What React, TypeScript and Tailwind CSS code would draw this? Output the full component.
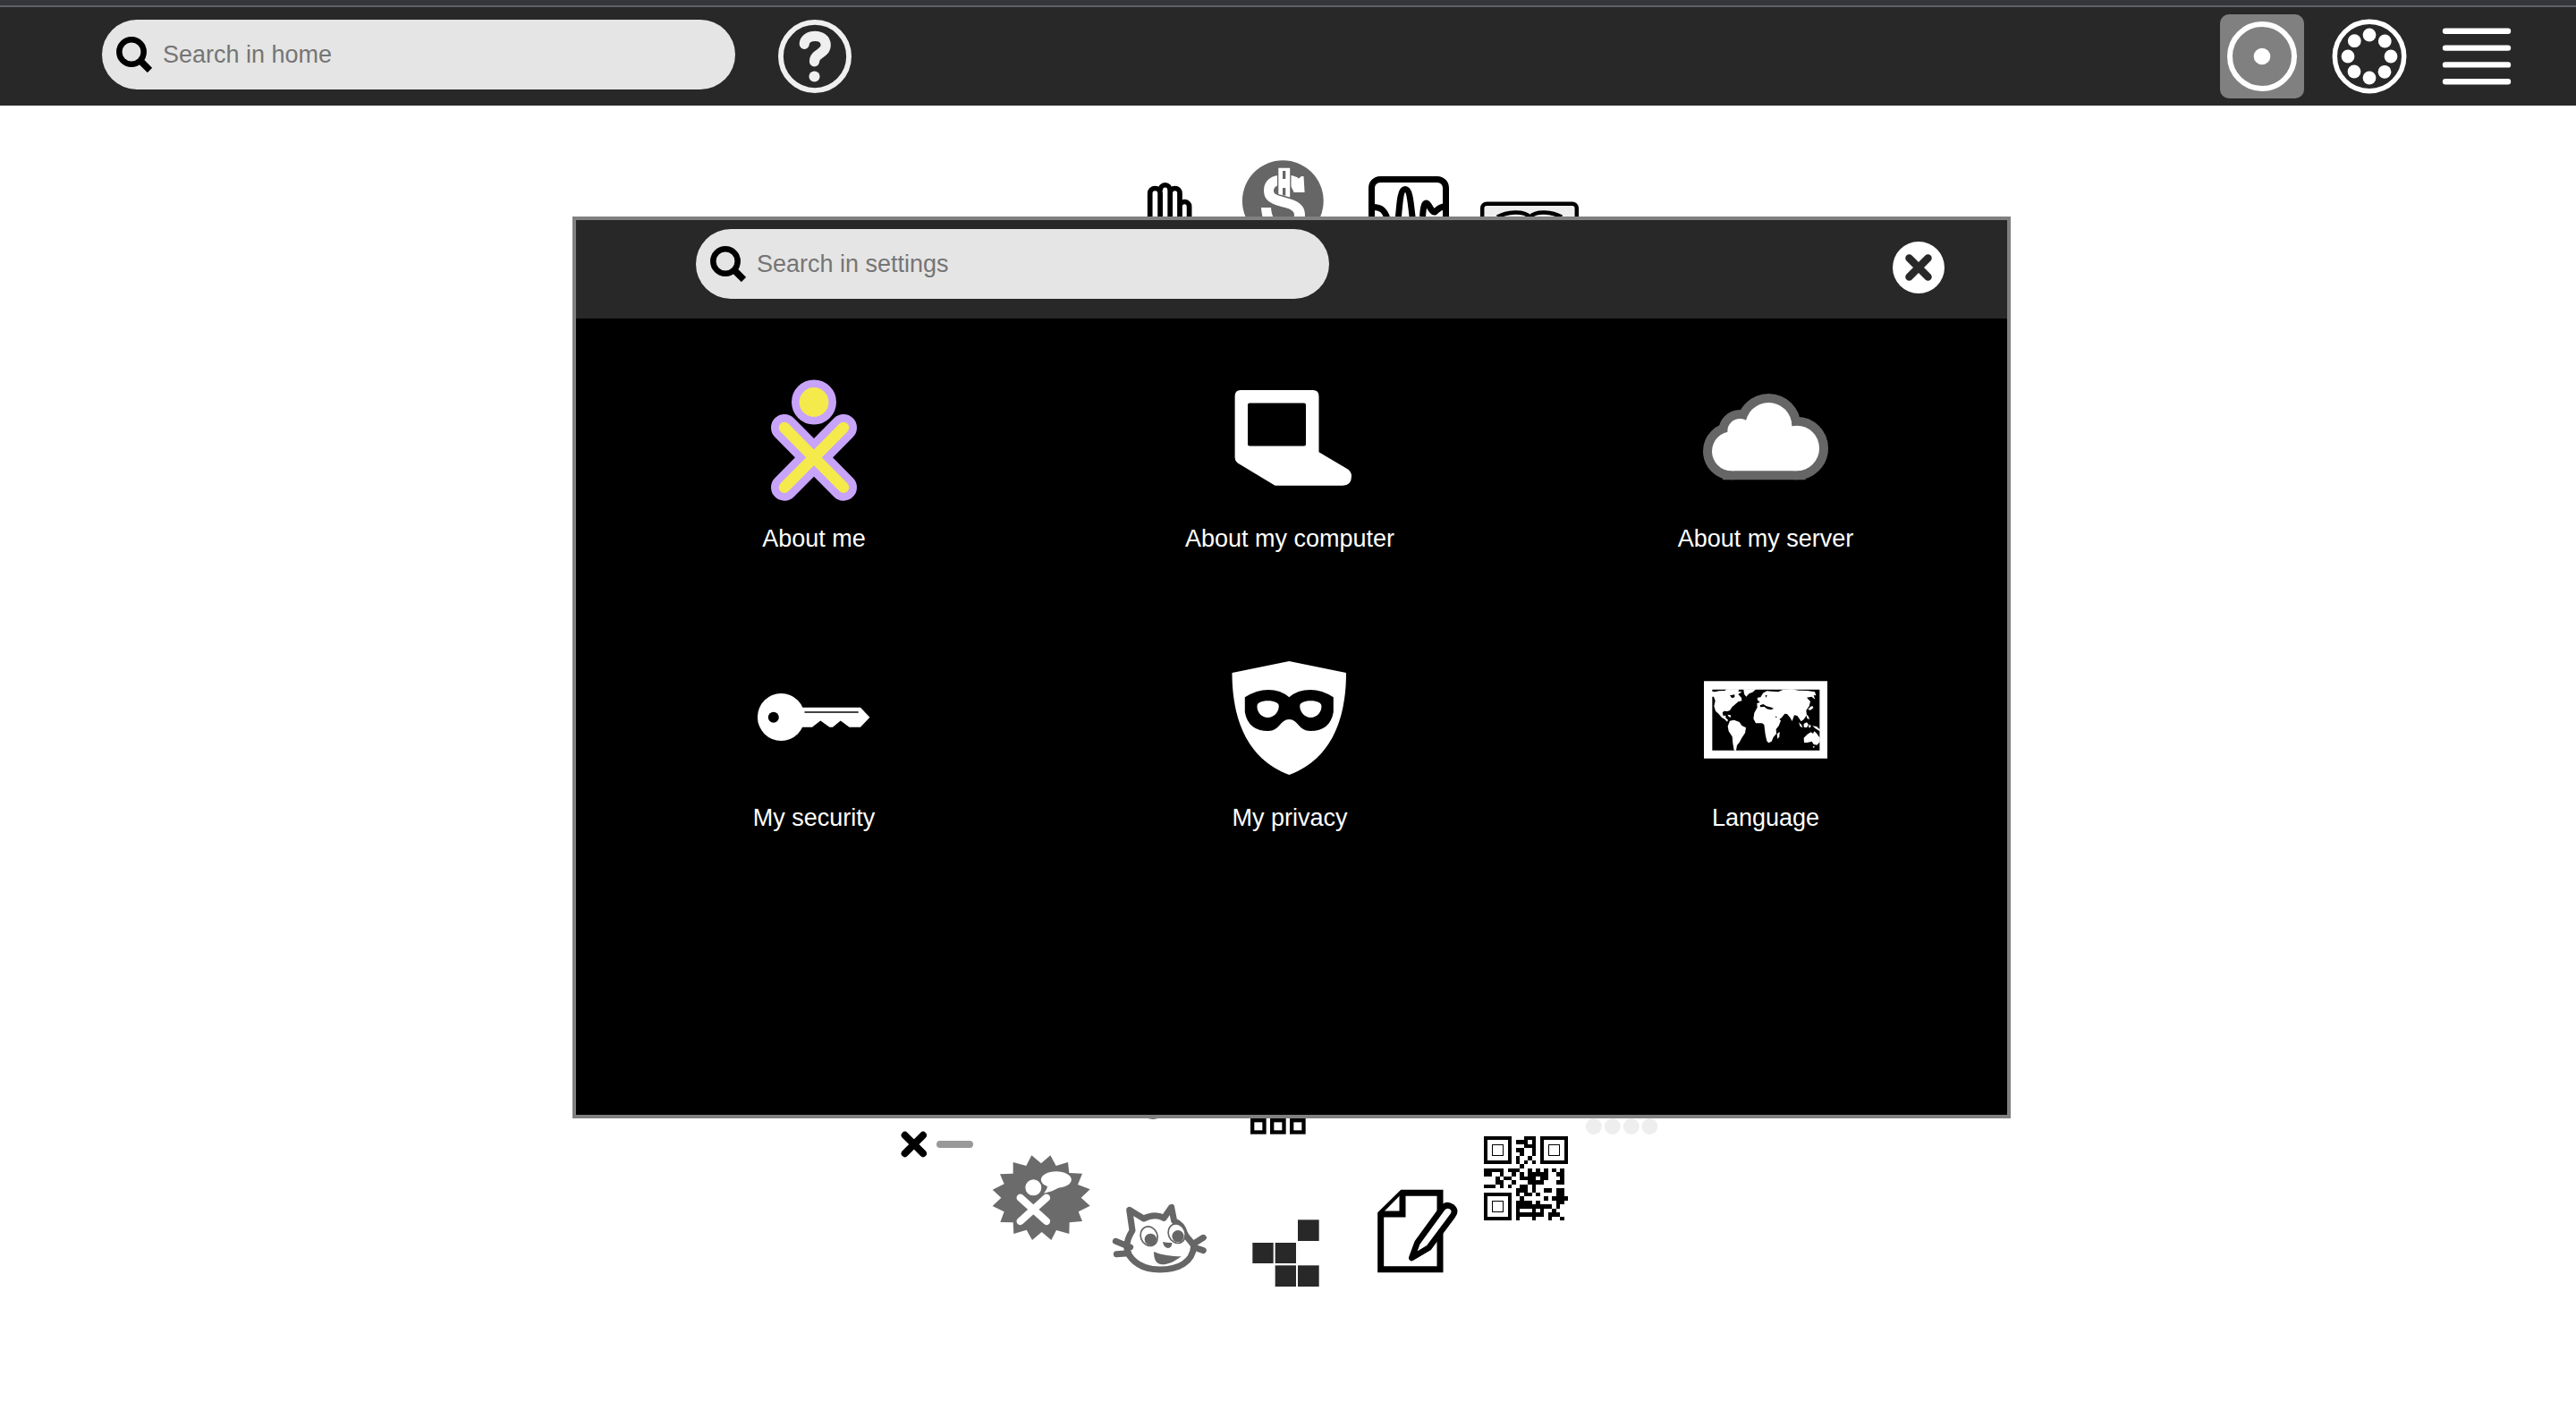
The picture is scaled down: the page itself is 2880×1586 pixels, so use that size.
import React from "react";

type Drawing = { name: string; box: string; view: string; art: React.ReactNode };

const qrRows = [
  "..........111........",
  "........111.1........",
  "..........111........",
  "........11..1........",
  ".........1..1........",
  "........1..1.........",
  "........1.1.1........",
  ".........1...........",
  "11111.111..1.1.1.1.1.",
  "11..1..1.1.11111..11.",
  "...1.11..1111.11...1.",
  "...11..1...1111...11.",
  "111.1.1..11.1........",
  "........111.1..11.11.",
  "........1.11.1....11.",
  ".........1.....1.1111",
  "........1111.1....11.",
  "........111111111.1..",
  "........1...1.1..1...",
  "........1111111.111..",
  "........1...1...1..1.",
];

function QrCode() {
  return (
    <g shapeRendering="crispEdges">
      {qrRows.flatMap((row, y) =>
        row.split("").map((c, x) => (c === "1" ? <rect key={`${x}-${y}`} x={x} y={y} width="1" height="1" /> : null)),
      )}
      {[
        [0, 0],
        [14, 0],
        [0, 14],
      ].map(([x, y]) => (
        <g key={`${x}:${y}`} fill="none" stroke="#000">
          <rect x={x + 0.5} y={y + 0.5} width="6" height="6" />
          <rect x={x + 2.1} y={y + 2.1} width="2.8" height="2.8" strokeWidth="0.25" />
        </g>
      ))}
    </g>
  );
}

const activities: Drawing[] = [
  {
    name: "Hand",
    box: "absolute left-[328px] top-[82px] h-[50px] w-[72px]",
    view: "1268 200 72 50",
    art: (
      <path
        d="M1285.7 260V216a5.7 5.5 0 0 1 11.4 0V260M1297.1 213a5.5 6.2 0 0 1 11.1 0V260M1308.2 216a5.4 5.5 0 0 1 10.8 0V260M1319 230.500a5.3 5 0 0 1 10.6 0V260"
        fill="#fff"
        stroke="#000"
        strokeWidth="5.7"
      />
    ),
  },
  {
    name: "Money",
    box: "absolute left-[446px] top-[58px] h-[98px] w-[98px]",
    view: "1386 176 98 98",
    art: (
      <>
        <circle cx="1434.3" cy="224.6" r="45.4" fill="#666" />
        <path
          d="M1458.600 215H1446.500C1444 208 1442 206 1436 206C1428 206 1424 209 1424 213C1424 217 1427 218 1436 220.500C1451 224 1459 229 1459 240C1459 252 1450 258 1435 258C1420 258 1411 251 1410 232H1421C1422 244 1426 249 1435 249C1443 249 1447 246 1447 240C1447 235 1441 233 1431 230.500C1419 227 1413 223 1413 213C1413 201 1422 195.500 1435 195.500C1444 195.500 1449 197 1452 199.500L1455 197H1457.500Z"
          fill="#fff"
        />
        <path d="M1428 186.500h15.500V219L1428 216Z" fill="#666" />
        <path d="M1429.300 187.700H1442.200V220.500L1429.300 217Z" fill="#fff" />
        <path d="M1434 191h3.300v9H1434ZM1434 210h3.300v8.500H1434Z" fill="#666" />
        <path d="M1429.500 231V250M1434.500 233H1436V241M1440 234Q1446 236 1445 250" fill="none" stroke="#666" strokeWidth="1.500" />
      </>
    ),
  },
  {
    name: "Measure",
    box: "absolute left-[588px] top-[77px] h-[96px] w-[96px]",
    view: "1528 195 96 96",
    art: (
      <g fill="none" stroke="#000" strokeWidth="7">
        <rect x="1533.500" y="200.500" width="83" height="83" rx="9.500" />
        <path d="M1535 231.500C1544 231.500 1548 235 1551 244C1554 254 1562 254 1563.500 242C1565 224 1566 211.500 1571 211.500C1576 211.500 1577 224 1579 242C1580 256 1589 256 1590.500 242C1591.500 226 1594 225 1597 229C1600 234 1602 237.500 1604 237C1607 235 1609 231 1615 231" />
      </g>
    ),
  },
  {
    name: "Video viewer",
    box: "absolute left-[712px] top-[104px] h-[70px] w-[116px]",
    view: "1652 222 116 70",
    art: (
      <g fill="#efefef" stroke="#000" strokeWidth="4.500">
        <rect x="1657.200" y="227.700" width="105.600" height="60" rx="5" />
        <path d="M1674 242.500C1684 237 1703 234.500 1710.500 242.500C1718 234.500 1736 237 1746 242.500" fill="none" />
      </g>
    ),
  },
  {
    name: "Planet",
    box: "absolute left-[340px] top-[1111px] h-[22px] w-[18px]",
    view: "0 0 18 22",
    art: <circle cx="9" cy="3" r="19" fill="#666" />,
  },
  {
    name: "Calculate",
    box: "absolute left-[65px] top-[1144px] h-[34px] w-[85px]",
    view: "45 96 255 102",
    art: (
      <g strokeWidth="24" strokeLinecap="round">
        <path d="M65 116.500L126 177.500M126 116.500L65 177.500" stroke="#000" />
        <path d="M183 147H282" stroke="#999" />
      </g>
    ),
  },
  {
    name: "Speak",
    box: "absolute left-[168px] top-[1172px] h-[98px] w-[112px]",
    view: "354 180 336 294",
    art: (
      <>
        <path
          d="M490 184L522 211L553 184L572 219L612 207L616 243L660 245L645 282L686 298L656 326L686 353L647 373L660 405L617 409L616 447L573 435L556 468L524 441L492 468L473 434L430 447L428 409L385 408L398 373L359 354L388 326L359 299L398 280L384 247L428 245L428 207L472 219Z"
          fill="#6b6b6b"
        />
        <path d="M545 280Q543 298 531 311Q560 306 582 292Z" fill="#fff" />
        <ellipse cx="572.500" cy="265.500" rx="51" ry="28" fill="#fff" />
        <circle cx="496" cy="292" r="29" fill="#fff" stroke="#6b6b6b" strokeWidth="4" />
        <path d="M452 326L540 405M540 326L452 405" stroke="#fff" strokeWidth="25" strokeLinecap="round" />
      </>
    ),
  },
  {
    name: "Scratch",
    box: "absolute left-[302px] top-[1226px] h-[80px] w-[108px]",
    view: "756 342 324 240",
    art: (
      <g fill="none" stroke="#666" strokeWidth="21" strokeLinecap="round" strokeLinejoin="round">
        <path
          d="M818 367L828 436C804 474 806 500 818 520C842 555 880 567 920 567C984 567 1030 542 1034 489C1030 474 1010 462 1003 444C997 422 983 410 968 404L959 358L934 394C915 384 890 384 866 396Z"
          fill="#fff"
        />
        <path d="M772 472L821 492M775 515L815 512M1034 480L1066 460M1034 492L1066 503" />
        <g strokeWidth="5" fill="#fff">
          <ellipse cx="884" cy="455" rx="28" ry="33" transform="rotate(-22 884 455)" />
          <ellipse cx="977" cy="446" rx="28" ry="33" transform="rotate(-22 977 446)" />
        </g>
        <g fill="#666" stroke="none">
          <circle cx="889" cy="466" r="20" />
          <circle cx="981" cy="455" r="20" />
          <path d="M930 474Q945 478 961 477Q962 494 947 495Q933 493 930 474Z" />
          <path d="M900 507C925 518 960 523 992 523C965 543 945 551 926 550C908 547 900 535 900 507Z" />
        </g>
      </g>
    ),
  },
  {
    name: "Tables",
    box: "absolute left-[457px] top-[1122px] h-[30px] w-[64px]",
    view: "111 30 192 90",
    art: (
      <g fill="#fff" stroke="#000" strokeWidth="13">
        <rect x="120.500" y="66.500" width="40" height="40" />
        <rect x="186.500" y="66.500" width="40" height="40" />
        <rect x="252.500" y="66.500" width="40" height="40" />
      </g>
    ),
  },
  {
    name: "Blocks",
    box: "absolute left-[459px] top-[1244px] h-[77px] w-[77px]",
    view: "117 396 231 231",
    art: (
      <g fill="#282828">
        <rect x="273" y="400" width="71" height="71" />
        <rect x="121" y="477" width="70" height="69" />
        <rect x="197" y="477" width="70" height="69" />
        <rect x="197" y="553" width="70" height="71" />
        <rect x="273" y="553" width="71" height="71" />
      </g>
    ),
  },
  {
    name: "Write",
    box: "absolute left-[599px] top-[1210px] h-[96px] w-[92px]",
    view: "537 294 276 288",
    art: (
      <g fill="#fff" stroke="#000" strokeWidth="21">
        <path d="M551 566.500V380L623 309.500H750V566.500Z" />
        <path d="M624 310V381H554" />
        <path
          d="M655 528L674 476L757 362Q772 344 790 357Q805 370 792 387L712 494Z"
          strokeLinejoin="round"
          strokeWidth="20"
        />
      </g>
    ),
  },
  {
    name: "QR code",
    box: "absolute left-[719px] top-[1152px] h-[94px] w-[94px]",
    view: "0 0 21 21",
    art: <QrCode />,
  },
  {
    name: "Four in a row",
    box: "absolute left-[832px] top-[1131px] h-[20px] w-[82px]",
    view: "426 57 246 60",
    art: (
      <g fill="#eee">
        <circle cx="455.500" cy="87" r="27" />
        <circle cx="518.500" cy="87" r="27" />
        <circle cx="581.500" cy="87" r="27" />
        <circle cx="643" cy="87" r="27" />
      </g>
    ),
  },
];

const settings: Omit<Drawing, "box">[] = [
  {
    name: "About me",
    view: "840 421 140 140",
    art: (
      <>
        <g strokeLinecap="round">
          <path d="M877 478L943 544.700M943 478L877 544.700" stroke="#c8a3fa" strokeWidth="30" />
          <path d="M877 478L943 544.700M943 478L877 544.700" stroke="#f5ea4b" strokeWidth="12.500" />
        </g>
        <circle cx="910" cy="449.500" r="20.700" fill="#f5ea4b" stroke="#c8a3fa" strokeWidth="8.600" />
      </>
    ),
  },
  {
    name: "About my computer",
    view: "1372 421 140 140",
    art: (
      <>
        <path
          d="M1387 436H1468Q1474.500 436 1474.500 443V505.300L1507 524.500Q1511 527.500 1511 532Q1511 542.700 1501 542.700H1426.500Q1425 542.700 1423.500 541.500L1383.700 517.500Q1380.600 515 1380.600 511.500V443Q1380.600 436 1387 436Z"
          fill="#fff"
        />
        <rect x="1395" y="450.500" width="65" height="48" rx="2" />
      </>
    ),
  },
  {
    name: "About my server",
    view: "132 63 420 420",
    art: (
      <>
        {["#666", "#fff"].map((color) => (
          <g key={color} fill={color} stroke={color} strokeWidth={color === "#666" ? 60 : 0}>
            <circle cx="228" cy="313" r="66" />
            <circle cx="256" cy="246" r="42" />
            <circle cx="352" cy="228" r="78" />
            <circle cx="446" cy="303" r="76" />
            <path d="M228 250H446V379H228Z" />
          </g>
        ))}
      </>
    ),
  },
  {
    name: "My security",
    view: "840 733 140 140",
    art: (
      <>
        <circle cx="873.300" cy="801.500" r="26.400" fill="#fff" />
        <path
          d="M895 790.700H962L972.400 801.700L962 812.700H949.500L939.800 805.500L931 812.700H927.500L917.300 805.500L908 812.700H895Z"
          fill="#fff"
        />
        <circle cx="864.800" cy="801.700" r="6" />
        <path d="M899.500 796H959.700" stroke="#444" strokeWidth="2" />
      </>
    ),
  },
  {
    name: "My privacy",
    view: "1372 733 140 140",
    art: (
      <>
        <path d="M1441.300 739L1505 752C1505 790 1496 846 1441.300 866C1386.600 846 1377.500 790 1377.500 752Z" fill="#fff" />
        <path d="M1391.800 779.300Q1405 771 1418 771Q1432 771 1441.300 779.300Q1450.500 771 1465 771Q1478 771 1490.800 779.300V796Q1487 817 1465 817C1452 817 1451 804 1441.300 804C1431.500 804 1430.500 817 1418 817Q1395.500 817 1391.800 796Z" />
        <path
          d="M1405.600 788C1407 781.500 1428 781.500 1429.700 788C1430.500 795 1424.500 802 1417.500 802C1410 802 1404.500 795 1405.600 788ZM1453.300 788C1455 781.500 1476 781.500 1477.300 788C1478.500 795 1472.500 802 1465.500 802C1458.500 802 1452.500 795 1453.300 788Z"
          fill="#fff"
        />
      </>
    ),
  },
  {
    name: "Language",
    view: "132 9 420 420",
    art: (
      <>
        <path d="M135 94H549V353H135Z" fill="#fff" />
        <path d="M163 122H523V326H163Z" />
        <g fill="#fff">
          <path d="M162 146V128L172 130L185 127L205 126L212 121H254L250 128L262 130L250 138L261 150L262 160L250 163L238 173L230 180L222 192L214 195L202 194L197 200L200 210L208 209L208 217L216 224L213 230L205 222L195 216L184 203L174 194L169 178L173 160L168 146Z" />
          <path d="M268 121H310L298 131L286 136L277 146L270 137Z" />
          <path d="M214 206L224 208L226 215L219 214Z" />
          <path d="M222 227L236 224L254 231L262 243L276 250L273 268L262 284L254 299L246 309L243 326H236L232 302L230 280L218 262L215 245Z" />
          <path d="M314 182L313 168L323 165L314 156L315 149L325 148L333 134L346 127L362 128L384 130L400 123L430 121L452 125L482 126L507 130L511 142L503 141L508 155L496 146L480 149L492 162L488 178L478 192L480 208L470 222L461 229L454 218L448 210L438 208L431 228L424 216L414 204L406 203L396 216L388 222L393 226L386 244L377 255L378 270L368 282L362 296L352 301L346 295L341 272L337 240L330 235L309 235L301 220L304 200Z" />
          <path d="M380 271L389 264L388 280L382 288Z" />
          <path d="M484 189L492 180L499 177L502 184L492 191Z" />
          <path d="M478 204L486 212L489 222L481 219Z" />
          <path d="M453 232L462 240L466 250L458 246Z" />
          <path d="M470 237L480 232L486 240L480 250L470 248Z" />
          <path d="M488 240L494 242L492 250L486 249Z" />
          <path d="M499 244L513 246L524 256V262L508 252Z" />
          <path d="M470 284L482 272L494 265L501 270L505 262L512 268L524 284V298L514 308L503 306L497 296L482 300L471 300Z" />
          <path d="M500 313H507L503 319Z" />
        </g>
        <path d="M323 175L334 171L345 178L362 182L369 186L360 190L346 187L338 180L324 181ZM222 142L238 139L238 148L229 151ZM374 211L381 215L377 217ZM341 140L347 142L343 150Z" />
      </>
    ),
  },
];

function SearchBox({ id, label, className }: { id: string; label: string; className: string }) {
  return (
    <div className={`flex h-[78px] w-[708px] items-center rounded-full bg-[#e5e5e5] pl-4 pr-8 ${className}`}>
      <label htmlFor={id} aria-label={label} className="shrink-0">
        <svg viewBox="0 0 40 40" className="h-10 w-10" fill="none" stroke="#000">
          <circle cx="17" cy="17" r="13.700" strokeWidth="6.500" />
          <path d="M26.500 26.500L37.500 37.500" strokeWidth="7.500" />
        </svg>
      </label>
      <input
        id={id}
        type="text"
        placeholder={label}
        className="ml-3 min-w-0 flex-1 bg-transparent text-[27px] leading-9 text-black outline-none placeholder:text-[#757575]"
      />
    </div>
  );
}

export default function App() {
  return (
    <div className="flex min-h-screen flex-col bg-white font-['Liberation_Sans',Arial,sans-serif]">
      <div className="h-2 border-b-2 border-[#605f68] bg-[#35363c]" />
      <header className="flex h-[110px] items-center bg-[#282828] pl-[114px] pr-16">
        <SearchBox id="search-home" label="Search in home" className="mb-1" />
        <button type="button" aria-label="Help" className="ml-12">
          <svg viewBox="869 21 84 84" className="h-[82px] w-[82px]" fill="none" stroke="#efefef">
            <circle cx="911" cy="63" r="39" strokeWidth="6" />
            <path d="M899 49C899 37 923.500 36 923.500 50C923.500 60.500 910.500 59 910.500 69" strokeWidth="11.500" strokeLinecap="round" />
            <circle cx="910.500" cy="86" r="6.200" fill="#efefef" stroke="none" />
          </svg>
        </button>
        <div className="ml-auto flex gap-[26px]">
          <button type="button" aria-label="Favorites view" className="rounded-[10px] bg-[#808080]">
            <svg viewBox="0 0 94 94" className="h-[94px] w-[94px]">
              <circle cx="47" cy="47" r="36" fill="none" stroke="#fff" strokeWidth="6" />
              <circle cx="47" cy="47" r="9.300" fill="#fff" />
            </svg>
          </button>
          <button type="button" aria-label="Neighborhood view">
            <svg viewBox="0 0 94 94" className="h-[94px] w-[94px]" fill="#fff">
              <circle cx="47" cy="47" r="38.700" fill="none" stroke="#fff" strokeWidth="5.500" />
              <circle cx="47" cy="23" r="7.400" />
              <circle cx="64.300" cy="30" r="7.400" />
              <circle cx="71" cy="47" r="7.400" />
              <circle cx="64" cy="64.300" r="7.400" />
              <circle cx="47" cy="71" r="7.400" />
              <circle cx="30" cy="64" r="7.400" />
              <circle cx="23" cy="47" r="7.400" />
              <circle cx="30.300" cy="29.700" r="7.400" />
            </svg>
          </button>
          <button type="button" aria-label="List view">
            <svg viewBox="0 0 94 94" className="h-[94px] w-[94px]">
              <path d="M12 18.700H82M12 37.600H82M12 56.400H82M12 75.200H82" stroke="#fff" strokeWidth="6.400" strokeLinecap="round" />
            </svg>
          </button>
        </div>
      </header>

      <main className="relative flex-1">
        <div className="relative mx-auto w-[1000px]">
          {activities.map((a) => (
            <button key={a.name} type="button" aria-label={a.name} className={a.box}>
              <svg viewBox={a.view} className="h-full w-full">
                {a.art}
              </svg>
            </button>
          ))}
        </div>

        <div className="absolute inset-x-0 top-[124px] flex justify-center pl-2">
          <section role="dialog" aria-label="Settings" className="w-[1608px] border-4 border-[#808080] bg-black">
            <div className="flex h-[110px] items-start bg-[#282828] pl-[134px] pr-[70px] pt-[10px]">
              <SearchBox id="search-settings" label="Search in settings" className="" />
              <button type="button" aria-label="Close" className="ml-auto mt-[14px]">
                <svg viewBox="0 0 58 58" className="h-[58px] w-[58px]">
                  <circle cx="29" cy="29" r="29" fill="#fff" />
                  <path d="M18.500 18.500L39.500 39.500M39.500 18.500L18.500 39.500" stroke="#282828" strokeWidth="8.500" strokeLinecap="round" />
                </svg>
              </button>
            </div>
            <div className="grid min-h-[890px] grid-cols-3 content-start gap-y-[113px] pr-1 pt-[65px]">
              {settings.map((s) => (
                <button key={s.name} type="button" className="flex flex-col items-center text-[27px] leading-9 text-white">
                  <svg viewBox={s.view} className="mb-[23px] h-[140px] w-[140px]">
                    {s.art}
                  </svg>
                  {s.name}
                </button>
              ))}
            </div>
          </section>
        </div>
      </main>
    </div>
  );
}
